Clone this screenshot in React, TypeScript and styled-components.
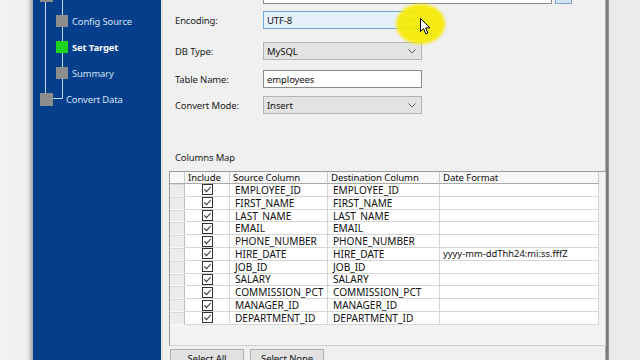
import React from "react";
import styled, { createGlobalStyle } from "styled-components";

const FONT = `"Noto Sans", "Open Sans", sans-serif`;

const Global = createGlobalStyle`
  html, body { margin: 0; padding: 0; width: 640px; height: 360px; overflow: hidden; background: #f0f0f0; }
  #root { width: 640px; height: 360px; }
  * { box-sizing: border-box; }
`;

const Screen = styled.div`
  display: flex;
  width: 640px;
  height: 360px;
  overflow: hidden;
  font-family: ${FONT};
  font-size: 10px;
  color: #1b1b1b;
`;

const LeftStrip = styled.div`
  width: 33px;
  flex: none;
  background: linear-gradient(to right, #f3f3f3 0, #eeeeee 27px, #d0d0d0 30px, #a4abb6 32px, #a4abb6 33px);
`;

const Sidebar = styled.div`
  position: relative;
  width: 128px;
  flex: none;
  background: #053e8b;
  overflow: hidden;
`;

const TreeLines = styled.svg`
  position: absolute;
  left: 0;
  top: 0;
  width: 128px;
  height: 120px;
`;

const TreeList = styled.div`
  display: flex;
  flex-direction: column;
  margin-top: -18px;
  position: relative;
`;

const TreeRow = styled.div<{ $indent: number; $gap: number }>`
  display: flex;
  align-items: center;
  height: 26px;
  padding-left: ${(p) => p.$indent}px;
  gap: ${(p) => p.$gap}px;
`;

const TreeBox = styled.span<{ $active?: boolean; $size: number }>`
  width: ${(p) => p.$size}px;
  height: ${(p) => p.$size}px;
  flex: none;
  background: ${(p) => (p.$active ? "#1fd41f" : "#8d8d8d")};
`;

const TreeLabel = styled.span<{ $active?: boolean }>`
  font-size: 9.4px;
  letter-spacing: -0.1px;
  color: ${(p) => (p.$active ? "#ffffff" : "#d6e2f4")};
  font-weight: ${(p) => (p.$active ? 700 : 400)};
  white-space: nowrap;
`;

const Divider = styled.div`
  width: 2px;
  flex: none;
  background: #e2e4e8;
`;

const Panel = styled.div`
  position: relative;
  width: 442px;
  flex: none;
  background: #f0f0f0;
  padding-left: 12px;
  display: flex;
  flex-direction: column;
  & > * { flex-shrink: 0; }
`;

const FormRow = styled.div<{ $mt: number }>`
  display: grid;
  grid-template-columns: 88px auto;
  align-items: center;
  height: 18px;
  margin-top: ${(p) => p.$mt}px;
`;

const Label = styled.span`
  font-size: 9.5px;
  letter-spacing: -0.15px;
  color: #1b1b1b;
`;

const Field = styled.div<{ $width: number; $variant: "text" | "combo" | "hot" }>`
  display: flex;
  align-items: center;
  justify-content: space-between;
  width: ${(p) => p.$width}px;
  height: 18px;
  padding: 0 5px 0 3px;
  font-size: 9.5px;
  letter-spacing: -0.1px;
  color: #111;
  background: ${(p) => (p.$variant === "text" ? "#ffffff" : p.$variant === "hot" ? "#e5f0fb" : "#e3e3e3")};
  border: 1px solid ${(p) => (p.$variant === "text" ? "#8a8a8a" : p.$variant === "hot" ? "#6fa6dc" : "#b4b4b4")};
`;

const FieldGroup = styled.div`
  display: flex;
  align-items: center;
  gap: 3px;
`;

const BrowseButton = styled.div`
  width: 17px;
  height: 18px;
  background: #d4e3f6;
  border: 1px solid #7ea3d6;
`;

const SectionTitle = styled.div`
  margin-top: 37px;
  height: 14px;
  font-size: 9.5px;
  letter-spacing: -0.15px;
  color: #1b1b1b;
`;

const GridFrame = styled.div`
  margin-top: 6px;
  margin-left: -6px;
  width: 437px;
  height: 175px;
  border: 1px solid #9a9a9a;
  border-right-color: #d0d0d0;
  border-bottom-color: #d0d0d0;
  background: #f3f3f3;
`;

const Table = styled.div`
  display: grid;
  grid-template-columns: 15px 45px 98px 112px 159px;
  grid-auto-rows: 12.8px;
  grid-template-rows: 12px;
`;

const HeadCell = styled.div`
  display: flex;
  align-items: center;
  padding-left: 3px;
  font-size: 9.6px;
  letter-spacing: -0.1px;
  color: #111;
  background: #f7f7f7;
  border-right: 1px solid #c9c9c9;
  border-bottom: 1px solid #a9a9a9;
  white-space: nowrap;
  overflow: hidden;
`;

const RowHead = styled.div`
  background: #ececec;
  border-right: 1px solid #bdbdbd;
  border-bottom: 1px solid #fafafa;
  border-top: 1px solid #d8d8d8;
`;

const Cell = styled.div<{ $center?: boolean; $caps?: boolean }>`
  display: flex;
  align-items: center;
  justify-content: ${(p) => (p.$center ? "center" : "flex-start")};
  padding-left: ${(p) => (p.$center ? 0 : p.$caps ? 5 : 3)}px;
  font-size: ${(p) => (p.$caps ? 10.1 : 9.4)}px;
  color: #111;
  background: #ffffff;
  border-right: 1px solid #d6d6d6;
  border-bottom: 1px solid #d6d6d6;
  white-space: nowrap;
  overflow: hidden;
`;

const ButtonRow = styled.div`
  display: flex;
  gap: 6px;
  margin-top: 3px;
  margin-left: -5px;
`;

const Button = styled.div`
  width: 74px;
  height: 22px;
  display: flex;
  justify-content: center;
  padding-top: 2px;
  font-size: 9.5px;
  letter-spacing: -0.1px;
  color: #111;
  background: #e1e1e1;
  border: 1px solid #adadad;
`;

const WindowEdge = styled.div`
  width: 4px;
  flex: none;
  background: linear-gradient(to right, #b8b8b8, #6e6e6e 50%, #9a9a9a);
`;

const RightStrip = styled.div`
  flex: 1;
  background: #ebebeb;
`;

const Highlight = styled.div`
  position: absolute;
  left: 233px;
  top: 4px;
  width: 49px;
  height: 40px;
  border-radius: 50%;
  background: rgba(246, 234, 0, 0.92);
  filter: blur(1.5px);
  pointer-events: none;
`;

const Cursor = styled.svg`
  position: absolute;
  left: 257px;
  top: 18px;
  width: 11px;
  height: 17px;
`;

const Chevron = () => (
  <svg width="8" height="5" viewBox="0 0 8 5">
    <polyline points="0.5,0.5 4,4 7.5,0.5" fill="none" stroke="#606060" strokeWidth="1" />
  </svg>
);

const Check = () => (
  <svg width="11" height="11" viewBox="0 0 11 11">
    <rect x="0.5" y="0.5" width="10" height="10" fill="#fff" stroke="#333" strokeWidth="1" />
    <polyline points="2.3,5.3 4.5,7.6 8.7,3" fill="none" stroke="#333" strokeWidth="1.1" />
  </svg>
);

const columns = [
  ["EMPLOYEE_ID", "EMPLOYEE_ID", ""],
  ["FIRST_NAME", "FIRST_NAME", ""],
  ["LAST_NAME", "LAST_NAME", ""],
  ["EMAIL", "EMAIL", ""],
  ["PHONE_NUMBER", "PHONE_NUMBER", ""],
  ["HIRE_DATE", "HIRE_DATE", "yyyy-mm-ddThh24:mi:ss.fffZ"],
  ["JOB_ID", "JOB_ID", ""],
  ["SALARY", "SALARY", ""],
  ["COMMISSION_PCT", "COMMISSION_PCT", ""],
  ["MANAGER_ID", "MANAGER_ID", ""],
  ["DEPARTMENT_ID", "DEPARTMENT_ID", ""],
];

export default function App() {
  return (
    <>
      <Global />
      <Screen>
        <LeftStrip />
        <Sidebar>
          <TreeLines viewBox="0 0 128 120">
            <line x1="12.5" y1="0" x2="12.5" y2="93" stroke="#c9d8f0" strokeWidth="1" />
            <line x1="29.5" y1="0" x2="29.5" y2="98.5" stroke="#c9d8f0" strokeWidth="1" />
            <line x1="20" y1="98.5" x2="29.5" y2="98.5" stroke="#c9d8f0" strokeWidth="1" />
          </TreeLines>
          <TreeList>
            <TreeRow $indent={7} $gap={4}>
              <TreeBox $size={13} />
            </TreeRow>
            <TreeRow $indent={23} $gap={4}>
              <TreeBox $size={12} />
              <TreeLabel>Config Source</TreeLabel>
            </TreeRow>
            <TreeRow $indent={23} $gap={4}>
              <TreeBox $size={12} $active />
              <TreeLabel $active>Set Target</TreeLabel>
            </TreeRow>
            <TreeRow $indent={23} $gap={4}>
              <TreeBox $size={12} />
              <TreeLabel>Summary</TreeLabel>
            </TreeRow>
            <TreeRow $indent={7} $gap={13}>
              <TreeBox $size={13} />
              <TreeLabel>Convert Data</TreeLabel>
            </TreeRow>
          </TreeList>
        </Sidebar>
        <Divider />
        <Panel>
          <FormRow $mt={-14}>
            <Label />
            <FieldGroup>
              <Field $width={289} $variant="text" />
              <BrowseButton />
            </FieldGroup>
          </FormRow>
          <FormRow $mt={7}>
            <Label>Encoding:</Label>
            <Field $width={159} $variant="hot">
              UTF-8
              <Chevron />
            </Field>
          </FormRow>
          <FormRow $mt={13}>
            <Label>DB Type:</Label>
            <Field $width={159} $variant="combo">
              MySQL
              <Chevron />
            </Field>
          </FormRow>
          <FormRow $mt={10}>
            <Label>Table Name:</Label>
            <Field $width={159} $variant="text">
              employees
            </Field>
          </FormRow>
          <FormRow $mt={8}>
            <Label>Convert Mode:</Label>
            <Field $width={159} $variant="combo">
              Insert
              <Chevron />
            </Field>
          </FormRow>
          <SectionTitle>Columns Map</SectionTitle>
          <GridFrame>
            <Table>
              <HeadCell />
              <HeadCell>Include</HeadCell>
              <HeadCell>Source Column</HeadCell>
              <HeadCell>Destination Column</HeadCell>
              <HeadCell>Date Format</HeadCell>
              {columns.map(([src, dst, fmt]) => (
                <React.Fragment key={src}>
                  <RowHead />
                  <Cell $center>
                    <Check />
                  </Cell>
                  <Cell $caps>{src}</Cell>
                  <Cell $caps>{dst}</Cell>
                  <Cell>{fmt}</Cell>
                </React.Fragment>
              ))}
            </Table>
          </GridFrame>
          <ButtonRow>
            <Button>Select All</Button>
            <Button>Select None</Button>
          </ButtonRow>
          <Highlight />
          <Cursor viewBox="0 0 11 17">
            <path d="M0.5 0.5 L0.5 13.5 L3.6 10.6 L5.8 15.8 L7.8 15 L5.7 9.9 L10 9.9 Z" fill="#ffffff" stroke="#000" strokeWidth="1" strokeLinejoin="round" />
          </Cursor>
        </Panel>
        <WindowEdge />
        <RightStrip />
      </Screen>
    </>
  );
}
